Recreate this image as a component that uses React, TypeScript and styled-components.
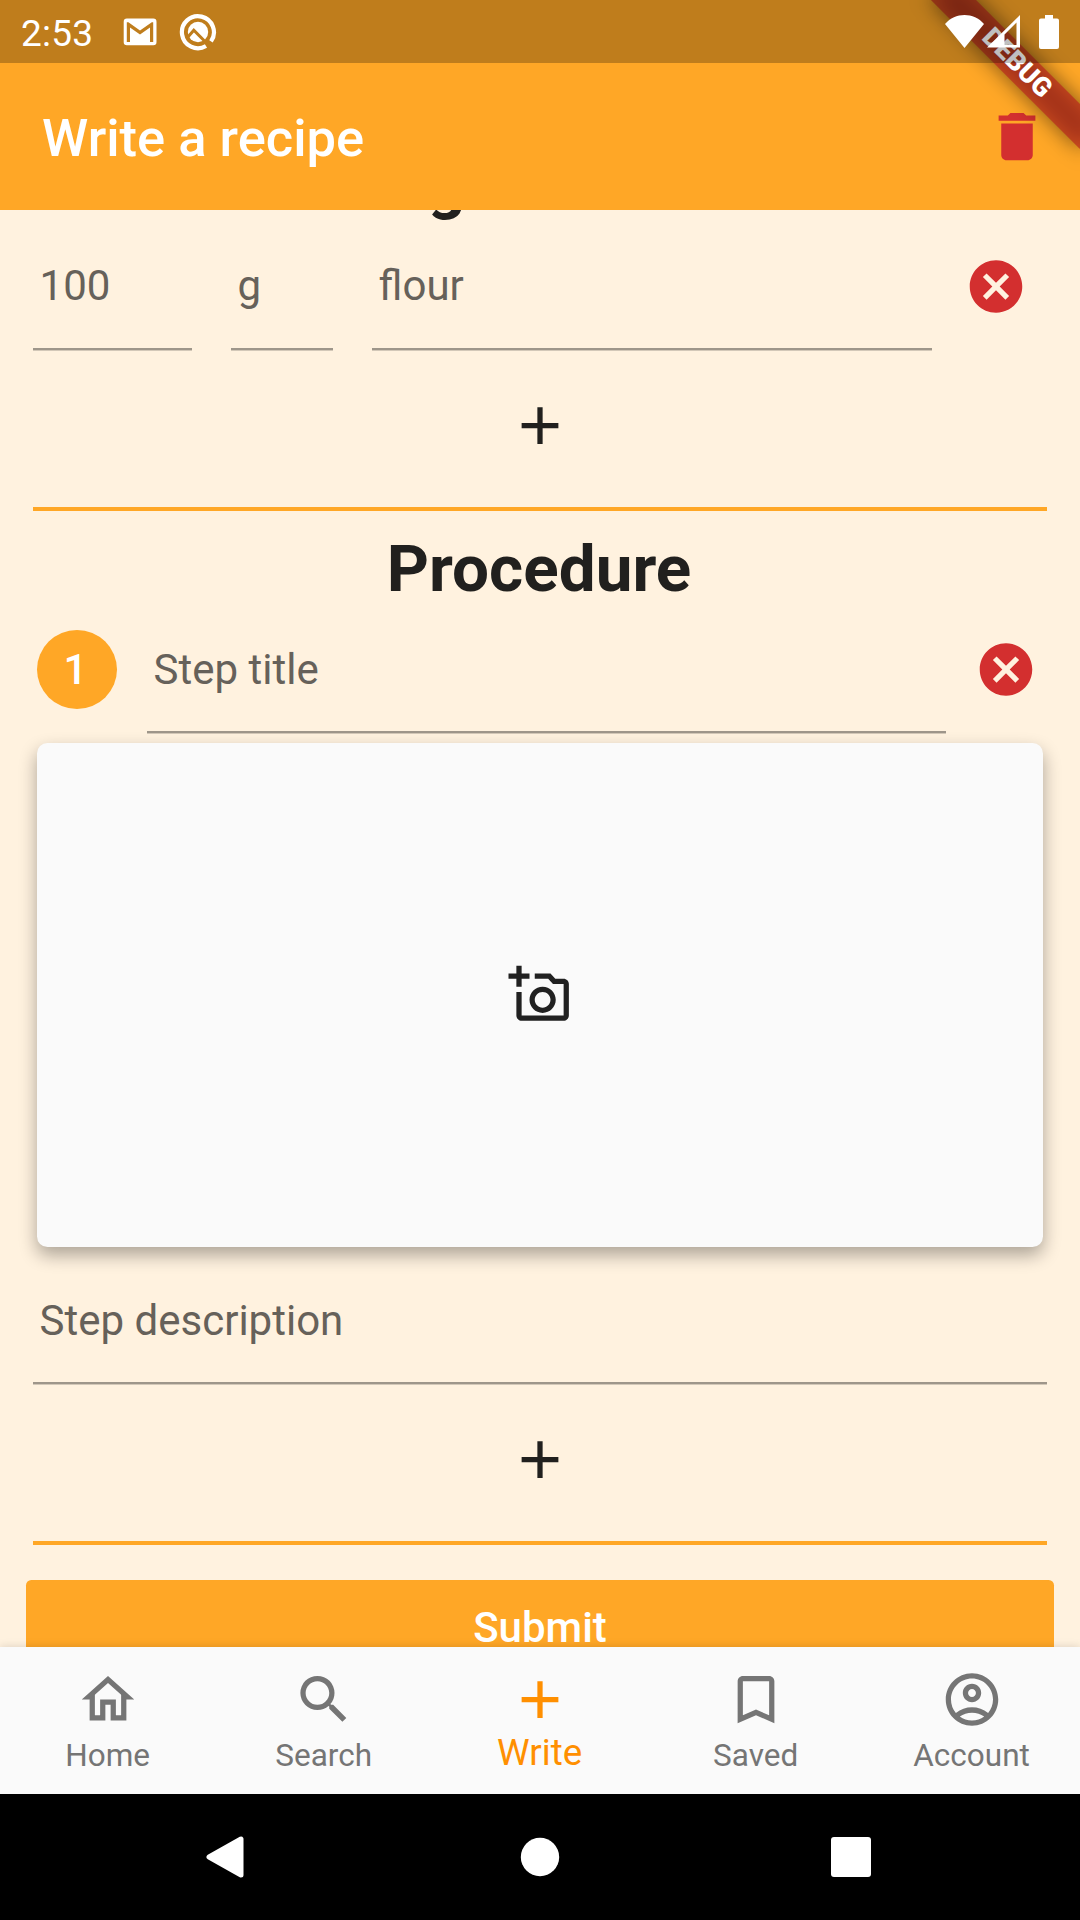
import React from "react";
import styled, { createGlobalStyle } from "styled-components";

const GlobalStyle = createGlobalStyle`
  * { box-sizing: border-box; }
  body { margin: 0; background: #000; }
`;

const orange = "#ffa726";
const ink = "#21201e";
const red = "#d32f2f";

const Screen = styled.div`
  width: 1080px;
  height: 1920px;
  display: flex;
  flex-direction: column;
  overflow: hidden;
  background: #fff2df;
  font-family: Roboto, "Noto Sans", sans-serif;
  color: ${ink};
`;

const Header = styled.header`
  position: relative;
  z-index: 1;
  flex: none;
  height: 210px;
  overflow: hidden;
  background: ${orange};
  color: #fff;
`;

const StatusBar = styled.div`
  position: relative;
  z-index: 2;
  display: flex;
  align-items: center;
  height: 63px;
  padding: 0 21px 0 21px;
  background: rgba(0, 0, 0, 0.25);
`;

const Clock = styled.span`
  width: 102px;
  font-size: 37px;
  line-height: 43px;
  letter-spacing: 0.2px;
  padding-top: 3px;
`;

const StatusIcon = styled.svg<{ $gap?: number }>`
  display: block;
  flex: none;
  margin-left: ${(p) => p.$gap ?? 0}px;
`;

const Spacer = styled.div`
  flex: 1;
`;

const AppBar = styled.div`
  display: flex;
  align-items: center;
  justify-content: space-between;
  height: 147px;
  padding: 0 31px 0 42px;
`;

const Title = styled.h1`
  margin: 0;
  padding-top: 2px;
  font-size: 52.5px;
  font-weight: 500;
  line-height: 62px;
`;

const Ribbon = styled.div`
  position: absolute;
  z-index: 1;
  left: 1080px;
  top: 0;
  width: 210px;
  height: 31.5px;
  transform-origin: 0 0;
  transform: rotate(45deg) translate(-105px, 73.5px);
  pointer-events: none;

  &::before {
    content: "";
    position: absolute;
    inset: 0;
    background: rgba(0, 0, 0, 0.5);
    filter: blur(10.4px);
  }
`;

const RibbonLabel = styled.span`
  position: relative;
  display: block;
  background: rgba(183, 28, 28, 0.627);
  text-align: center;
  font-size: 26.8px;
  font-weight: 900;
  line-height: 31.5px;
`;

const Body = styled.main`
  flex: 1;
  min-height: 0;
  overflow: hidden;
`;

const Form = styled.div`
  display: flex;
  flex-direction: column;
  margin-top: -63px;
  padding: 0 33px;
`;

const Heading = styled.h2<{ $top?: number; $bottom?: number }>`
  margin: ${(p) => p.$top ?? 0}px 0 ${(p) => p.$bottom ?? 0}px;
  padding-right: 2px;
  font-size: 65.6px;
  font-weight: 700;
  line-height: 76px;
  text-align: center;
`;

const Row = styled.div<{ $end: number }>`
  display: flex;
  align-items: center;
  height: 127px;
  padding-right: ${(p) => p.$end}px;
`;

const Field = styled.div<{ $width?: number; $gap?: number; $top?: number }>`
  flex: ${(p) => (p.$width ? "none" : 1)};
  width: ${(p) => (p.$width ? `${p.$width}px` : "auto")};
  height: 127px;
  margin-right: ${(p) => p.$gap ?? 0}px;
  padding: ${(p) => p.$top ?? 39}px 0 0 6.6px;
  border-bottom: 2px solid #9e968a;
  box-shadow: 0 1px 0 #d3c8b8;
  font-size: 42px;
  line-height: 49px;
  color: #66615a;
`;

const StepNumber = styled.div`
  flex: none;
  width: 80px;
  height: 79px;
  margin: 0 30px 0 4px;
  padding-right: 3px;
  border-radius: 50%;
  background: ${orange};
  color: #fff;
  font-size: 42px;
  font-weight: 500;
  line-height: 79px;
  text-align: center;
`;

const AddButton = styled.button`
  display: flex;
  align-items: center;
  justify-content: center;
  height: 151px;
  margin: 0 0 6px;
  padding: 0;
  border: 0;
  background: none;
  color: ${ink};
`;

const Divider = styled.div`
  height: 4px;
  background: ${orange};
`;

const PhotoCard = styled.div`
  display: flex;
  align-items: center;
  justify-content: center;
  height: 504px;
  margin: 10px 4px 10px 4px;
  padding: 0 0 2px 0;
  border-radius: 10.5px;
  background: #fafafa;
  box-shadow: 0 8px 18px rgba(0, 0, 0, 0.33);
`;

const Submit = styled.button`
  height: 95px;
  margin: 35px -7px 0;
  padding: 0 0 1px;
  border: 0;
  border-radius: 5.25px;
  background: ${orange};
  color: #fff;
  font-family: inherit;
  font-size: 42px;
  font-weight: 500;
  line-height: 49px;
`;

const TabBar = styled.nav`
  position: relative;
  flex: none;
  display: flex;
  height: 147px;
  background: #fafafa;
  box-shadow: 0 -1px 8px rgba(0, 0, 0, 0.12);
`;

const Tab = styled.div<{ $active?: boolean }>`
  flex: 1;
  display: flex;
  flex-direction: column;
  align-items: center;
  padding-top: 21px;
  color: ${(p) => (p.$active ? "#ff8f00" : "#757575")};
  font-size: ${(p) => (p.$active ? 36.75 : 31.5)}px;
  line-height: ${(p) => (p.$active ? 43 : 37)}px;
`;

const TabLabel = styled.span<{ $active?: boolean }>`
  margin: ${(p) => (p.$active ? 0 : 6)}px 0.8px 0 0;
`;

const SystemBar = styled.div`
  flex: none;
  display: flex;
  align-items: center;
  justify-content: space-between;
  height: 126px;
  padding: 0 209px 0 206px;
  background: #000;
`;

const paths = {
  trash:
    "M6 19c0 1.1.9 2 2 2h8c1.1 0 2-.9 2-2V7H6v12zM19 4h-3.5l-1-1h-5l-1 1H5v2h14V4z",
  cancel:
    "M12 2C6.47 2 2 6.47 2 12s4.47 10 10 10 10-4.47 10-10S17.53 2 12 2zm5 13.59L15.59 17 12 13.41 8.41 17 7 15.59 10.59 12 7 8.41 8.41 7 12 10.59 15.59 7 17 8.41 13.41 12 17 15.59z",
  plus: "M19 13h-6v6h-2v-6H5v-2h6V5h2v6h6v2z",
  camera:
    "M21 6h-3.17L16 4h-6v2h5.12l1.83 2H21v12H5v-9H3v9c0 1.1.9 2 2 2h16c1.1 0 2-.9 2-2V8c0-1.1-.9-2-2-2zM8 14c0 2.76 2.24 5 5 5s5-2.24 5-5-2.24-5-5-5-5 2.24-5 5zm5-3c1.65 0 3 1.35 3 3s-1.35 3-3 3-3-1.35-3-3 1.35-3 3-3zM5 6h3V4H5V1H3v3H0v2h3v3h2z",
  home: "M12 5.69l5 4.5V18h-2v-6H9v6H7v-7.81l5-4.5M12 3L2 12h3v8h6v-6h2v6h6v-8h3L12 3z",
  search:
    "M15.5 14h-.79l-.28-.27A6.471 6.471 0 0 0 16 9.5 6.5 6.5 0 1 0 9.5 16c1.61 0 3.09-.59 4.23-1.57l.27.28v.79l5 4.99L20.49 19l-4.99-5zm-6 0C7.01 14 5 11.99 5 9.5S7.01 5 9.5 5 14 7.01 14 9.5 11.99 14 9.5 14z",
  bookmark:
    "M17 3H7c-1.1 0-1.99.9-1.99 2L5 21l7-3 7 3V5c0-1.1-.9-2-2-2zm0 15l-5-2.18L7 18V5h10v13z",
  account:
    "M12 2C6.48 2 2 6.48 2 12s4.48 10 10 10 10-4.48 10-10S17.52 2 12 2zM7.35 18.5C8.66 17.56 10.26 17 12 17s3.34.56 4.65 1.5c-1.31.94-2.91 1.5-4.65 1.5s-3.34-.56-4.65-1.5zm10.79-1.38a9.947 9.947 0 0 0-12.28 0A7.957 7.957 0 0 1 4 12c0-4.42 3.58-8 8-8s8 3.58 8 8c0 1.95-.7 3.73-1.86 5.12zM12 6c-1.93 0-3.5 1.57-3.5 3.5S10.07 13 12 13s3.5-1.57 3.5-3.5S13.93 6 12 6zm0 5c-.83 0-1.5-.67-1.5-1.5S11.17 8 12 8s1.5.67 1.5 1.5S12.83 11 12 11z",
};

const Glyph = styled.svg`
  display: block;
  flex: none;
  width: 64px;
  height: 63px;
  fill: currentColor;
`;

function Icon({ name, color }: { name: keyof typeof paths; color?: string }) {
  return (
    <Glyph viewBox="0 0 24 24" color={color}>
      <path d={paths[name]} />
    </Glyph>
  );
}

const tabs: { icon: keyof typeof paths; label: string; active?: boolean }[] = [
  { icon: "home", label: "Home" },
  { icon: "search", label: "Search" },
  { icon: "plus", label: "Write", active: true },
  { icon: "bookmark", label: "Saved" },
  { icon: "account", label: "Account" },
];

export default function App() {
  return (
    <Screen>
      <GlobalStyle />
      <Header>
        <StatusBar>
          <Clock>2:53</Clock>
          <StatusIcon width="34" height="28" viewBox="0 0 34 28">
            <rect x="0.7" y="0.5" width="32.8" height="26.8" rx="3.2" fill="#fff" />
            <path
              d="M3.8 24V4.2H5.4L17 12.6L28.8 4.2H30.2V24H27V9.6L17 16.6L7 9.6V24Z"
              fill="#bf7d1d"
            />
          </StatusIcon>
          <StatusIcon $gap={22} width="38" height="38" viewBox="0 0 38 38">
            <path
              d="M27 33A16 16 0 1 1 32 28.4"
              fill="none"
              stroke="#fff"
              strokeWidth="4.2"
            />
            <circle cx="19" cy="19" r="10.2" fill="#fff" />
            <path d="M8.5 24.5L14.8 17.2L28 30.5" fill="none" stroke="#bf7d1d" strokeWidth="3" />
          </StatusIcon>
          <Spacer />
          <StatusIcon width="39" height="33" viewBox="0 0 39 33">
            <path d="M0 9C10-3 29-3 39 9L19.5 33Z" fill="#fff" />
          </StatusIcon>
          <StatusIcon $gap={3} width="33" height="33" viewBox="0 0 33 33">
            <path
              d="M0 32.5L33 0V32.5ZM17.5 30H29.5V7.5L17.5 19.5Z"
              fill="#fff"
              fillRule="evenodd"
            />
          </StatusIcon>
          <StatusIcon $gap={19} width="20" height="34" viewBox="0 0 20 34">
            <path
              d="M6 0H14V3.5H18A2 2 0 0 1 20 5.5V32A2 2 0 0 1 18 34H2A2 2 0 0 1 0 32V5.5A2 2 0 0 1 2 3.5H6Z"
              fill="#fff"
            />
          </StatusIcon>
        </StatusBar>
        <AppBar>
          <Title>Write a recipe</Title>
          <Icon name="trash" color={red} />
        </AppBar>
        <Ribbon>
          <RibbonLabel>DEBUG</RibbonLabel>
        </Ribbon>
      </Header>

      <Body>
        <Form>
          <Heading>Ingredients</Heading>
          <Row $end={19}>
            <Field $width={159} $gap={39} $top={38}>100</Field>
            <Field $width={102} $gap={39} $top={38}>g</Field>
            <Field $gap={32} $top={38}>flour</Field>
            <Icon name="cancel" color={red} />
          </Row>
          <AddButton>
            <Icon name="plus" />
          </AddButton>
          <Divider />

          <Heading $top={20} $bottom={-1}>Procedure</Heading>
          <Row $end={9}>
            <StepNumber>1</StepNumber>
            <Field $gap={28}>Step title</Field>
            <Icon name="cancel" color={red} />
          </Row>
          <PhotoCard>
            <Icon name="camera" color="#212121" />
          </PhotoCard>
          <Row $end={0}>
            <Field>Step description</Field>
          </Row>
          <AddButton>
            <Icon name="plus" />
          </AddButton>
          <Divider />
          <Submit>Submit</Submit>
        </Form>
      </Body>

      <TabBar>
        {tabs.map((t) => (
          <Tab key={t.label} $active={t.active}>
            <Icon name={t.icon} />
            <TabLabel $active={t.active}>{t.label}</TabLabel>
          </Tab>
        ))}
      </TabBar>
      <SystemBar>
        <StatusIcon width="38" height="42" viewBox="0 0 38 42">
          <path d="M3 21L35 3V39Z" fill="#fff" stroke="#fff" strokeWidth="5" strokeLinejoin="round" />
        </StatusIcon>
        <StatusIcon $gap={5} width="40" height="40" viewBox="0 0 40 40">
          <circle cx="20" cy="20" r="19.2" fill="#fff" />
        </StatusIcon>
        <StatusIcon width="40" height="40" viewBox="0 0 40 40">
          <rect width="40" height="40" rx="3" fill="#fff" />
        </StatusIcon>
      </SystemBar>
    </Screen>
  );
}
